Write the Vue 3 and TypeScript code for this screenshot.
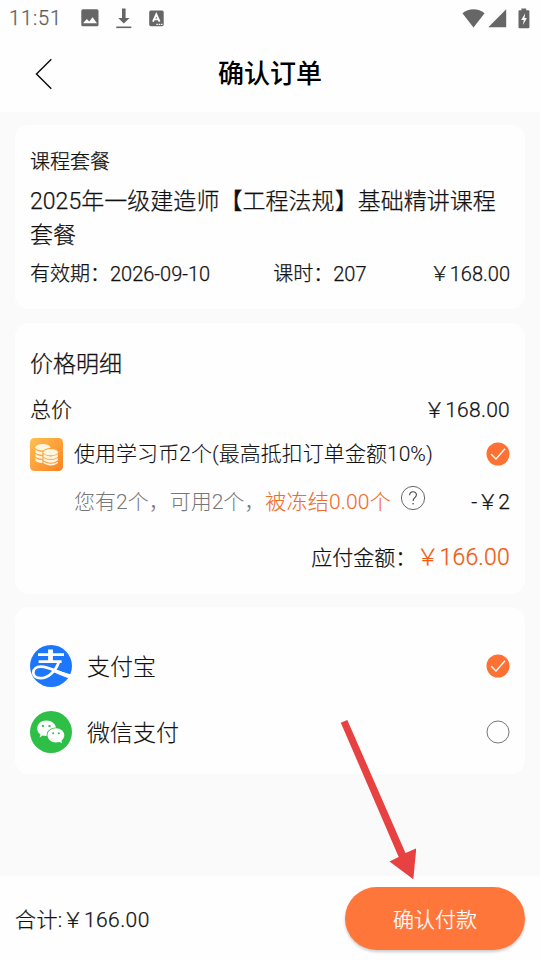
<script setup lang="ts">
import { ref } from 'vue'

type PayMethod = 'alipay' | 'wechat'

const useCoins = ref(true)
const pay = ref<PayMethod>('alipay')
const methods: { id: PayMethod; label: string }[] = [
  { id: 'alipay', label: '支付宝' },
  { id: 'wechat', label: '微信支付' },
]
</script>

<template>
  <div class="page">
    <div class="status">
      <span class="clock">11:51</span>
      <svg class="s-image" width="18" height="18" viewBox="0 0 18 18">
        <rect x="0.3" y="0.3" width="17.2" height="17" rx="1.6" fill="#666" />
        <path d="M2 14.2 5.8 10l2.4 2.6 3.4-4.4 4.4 6z" fill="#fff" />
      </svg>
      <svg class="s-down" width="16" height="21" viewBox="0 0 16 21">
        <path d="M6 0.5h3.6V10h4L7.8 15.6 2.2 10H6z" fill="#666" />
        <rect x="0.3" y="18.5" width="15" height="1.6" fill="#666" />
      </svg>
      <svg class="s-a" width="15" height="17" viewBox="0 0 15 17">
        <rect x="0.2" y="0.4" width="14.5" height="15.8" rx="1.6" fill="#666" />
        <path d="M4 11.6 7.3 4.4 10.6 11.6M5 9.4h4.6" fill="none" stroke="#fff" stroke-width="1.9" />
        <path d="M7.4 14.3h6.4" stroke="#fff" stroke-width="1.2" stroke-dasharray="1.5 .8" />
      </svg>
      <svg class="s-wifi" width="23" height="19" viewBox="0 0 23 19">
        <path d="M0.4 4.3C7-1 16-1 22.6 4.3L11.5 18.4z" fill="#666" />
      </svg>
      <svg class="s-signal" width="19" height="19" viewBox="0 0 19 19">
        <path d="M18.2 0.3v18H0.3z" fill="#666" />
      </svg>
      <svg class="s-battery" width="12" height="21" viewBox="0 0 12 21">
        <path d="M3.4 0.4h4.8v1.8h2.2q1 0 1 1v16q0 1-1 1H1.5q-1 0-1-1v-16q0-1 1-1h1.9z" fill="#666" />
        <path d="M7.2 5.2 3.2 12h2.6l-.9 5 4-7H6.5z" fill="#fff" />
      </svg>
    </div>

    <header class="header">
      <svg class="back" width="18" height="32" viewBox="0 0 18 32">
        <path d="M16.3 1.3 1.5 16l14.8 14.7" fill="none" stroke="#111" stroke-width="1.5" />
      </svg>
      <h1>确认订单</h1>
    </header>

    <main class="content">
      <section class="card course">
        <div class="kind">课程套餐</div>
        <div class="name">2025年一级建造师【工程法规】基础精讲课程套餐</div>
        <div class="meta">
          <span>有效期：2026-09-10</span>
          <span class="hours">课时：207</span>
          <span class="end">￥168.00</span>
        </div>
      </section>

      <section class="card price">
        <div class="heading">价格明细</div>
        <div class="row total"><span>总价</span><span class="end wide">￥168.00</span></div>
        <div class="row coins" @click="useCoins = !useCoins">
          <svg class="coin" width="33" height="33" viewBox="0 0 33 33">
            <defs>
              <linearGradient id="coinBg" x1="0" y1="0" x2="1" y2="1">
                <stop offset="0" stop-color="#ffc051" />
                <stop offset="1" stop-color="#fb8222" />
              </linearGradient>
            </defs>
            <rect width="33" height="33" rx="4.5" fill="url(#coinBg)" />
            <g fill="#fff6e2">
              <ellipse cx="12.8" cy="9.3" rx="7.4" ry="3.2" />
              <path d="M5.4 11.6q2 2.3 7 2.5v2.7q-5.4-.2-7-2.6zM5.4 15.7q2 2.3 7 2.5v2.7q-5.4-.2-7-2.6zM5.4 19.8q2 2.3 7 2.5v2.7q-5.4-.2-7-2.6z" />
            </g>
            <ellipse cx="20.7" cy="14.1" rx="8" ry="4" fill="#fea33a" />
            <g fill="#fff6e2">
              <ellipse cx="20.7" cy="14.2" rx="7.2" ry="3.1" />
              <path d="M13.5 16.3q7.2 4.2 14.4 0v2.6q-7.2 4.5-14.4 0zM13.5 20q7.2 4.2 14.4 0v2.6q-7.2 4.5-14.4 0zM13.5 23.7q7.2 4.2 14.4 0v1.6q-7.2 4.5-14.4 0z" />
            </g>
          </svg>
          <span class="coin-label">使用学习币2个(最高抵扣订单金额10%)</span>
          <svg v-if="useCoins" class="end tick" width="24" height="24" viewBox="0 0 24 24">
            <circle cx="12" cy="12" r="11.5" fill="#ff7033" />
            <path d="M5.2 12.2 10 17l9-10.2" fill="none" stroke="#fff" stroke-width="1.4" />
          </svg>
          <svg v-else class="end tick" width="24" height="24" viewBox="0 0 24 24">
            <circle cx="12" cy="12" r="11" fill="none" stroke="#666" />
          </svg>
        </div>
        <div class="row detail">
          <span class="own">您有2个，可用2个，</span><span class="frozen">被冻结0.00个</span>
          <svg class="help" width="26" height="26" viewBox="0 0 26 26">
            <circle cx="13" cy="13" r="11.6" fill="none" stroke="#555" stroke-width="0.9" />
            <path d="M9.6 10.2q.2-3.4 3.4-3.4t3.4 3q0 1.6-1.7 3-1.6 1.3-1.6 3.1" fill="none" stroke="#444" stroke-width="1.1" />
            <circle cx="13.1" cy="18.7" r="0.8" fill="#444" />
          </svg>
          <span class="end">-￥2</span>
        </div>
        <div class="row due"><span>应付金额：</span><span class="amount">￥166.00</span></div>
      </section>

      <section class="card methods">
        <div v-for="m in methods" :key="m.id" class="method" @click="pay = m.id">
          <svg v-if="m.id === 'alipay'" width="42" height="42" viewBox="0 0 42 42">
            <circle cx="21" cy="21" r="21" fill="#1c77fd" />
            <g fill="none" stroke="#fff">
              <path d="M8 9.6h26M8.6 16.6h23" stroke-width="2.8" />
              <path d="M20.5 4.5V17" stroke-width="4.8" />
              <path d="M29 16.5C26 26 18 33.2 10.6 33.2 5.6 33.2 3.3 30.6 3.3 27.7c0-3.6 3-6 7.6-6 7 0 15 4.5 29.5 9.7" stroke-width="2.7" />
            </g>
            <path d="M24.5 24.2q8 3 16.8 5.3l-1.6 4.2Q30 30.2 22.5 26.7z" fill="#fff" />
          </svg>
          <svg v-else width="42" height="42" viewBox="0 0 42 42">
            <circle cx="21" cy="21" r="21" fill="#2dbf46" />
            <path d="M16.3 9.5c5.3 0 9.3 3.4 9.7 7.1-5.2-.2-9.6 3.4-9.4 8.4-1.3.1-2.7-.1-4-.4l-3 1.8.8-3c-2-1.5-3.2-3.5-3.2-6 0-4.4 4-7.9 9.1-7.9z" fill="#fff" />
            <path d="M25.9 17.3c4.8 0 8.4 3.2 8.4 7 0 2.2-1.2 4.1-2.8 5.4l.6 2.5-2.6-1.3c-1.1.3-2.3.5-3.6.5-4.7 0-8.4-3.2-8.4-7.1s3.7-7 8.4-7z" fill="#fff" />
            <g fill="#2dbf46">
              <ellipse cx="12.9" cy="15" rx="1.3" ry="1.1" /><ellipse cx="19.5" cy="15" rx="1.3" ry="1.1" />
              <circle cx="23.2" cy="22.2" r="1" /><circle cx="28.8" cy="22.2" r="1" />
            </g>
          </svg>
          <span class="method-name">{{ m.label }}</span>
          <svg v-if="pay === m.id" class="end" width="24" height="24" viewBox="0 0 24 24">
            <circle cx="12" cy="12" r="11.5" fill="#ff7033" />
            <path d="M5.2 12.2 10 17l9-10.2" fill="none" stroke="#fff" stroke-width="1.4" />
          </svg>
          <svg v-else class="end" width="24" height="24" viewBox="0 0 24 24">
            <circle cx="12" cy="12" r="11" fill="none" stroke="#666" stroke-width="0.9" />
          </svg>
        </div>
      </section>
    </main>

    <footer class="footer">
      <span class="sum">合计:￥166.00</span>
      <button type="button">确认付款</button>
    </footer>

    <svg class="pointer" width="80" height="164" viewBox="0 0 80 164">
      <path d="M4.8 4.7 11.3 1.9 69.5 134.9l10.8-4.6L77.3 161.2 53.5 143.5l9.2-4.6z" fill="#e84142" />
    </svg>
  </div>
</template>

<style>
body {
  background: #fafafa;
}
</style>

<style scoped>
.page {
  position: relative;
  width: 540px;
  height: 960px;
  overflow: hidden;
  display: flex;
  flex-direction: column;
  background: #fafafa;
  color: #111;
  font-family: Roboto, 'Noto Sans CJK SC', sans-serif;
  font-weight: 300;
  -webkit-text-stroke-width: 0.25px;
  font-size: 21px;
  line-height: 30px;
  white-space: nowrap;
}
svg {
  display: block;
  flex: none;
}
.end {
  margin-left: auto;
}
.status {
  box-sizing: border-box;
  height: 36px;
  padding: 0 10px 0 9px;
  display: flex;
  align-items: center;
  background: #fefefe;
  color: #5c5c5c;
}
.clock {
  width: 72px;
  font-size: 20px;
  letter-spacing: 0.9px;
}
.s-down {
  margin-left: 17px;
}
.s-a {
  margin-left: 17px;
}
.s-wifi {
  margin-left: auto;
}
.s-signal {
  margin-left: 3px;
}
.s-battery {
  margin-left: 11px;
}
.header {
  box-sizing: border-box;
  height: 76px;
  padding-bottom: 1px;
  display: grid;
  grid-template-columns: 1fr auto 1fr;
  align-items: center;
  background: #fefefe;
}
.back {
  margin-left: 35px;
}
h1 {
  margin: 0;
  font-size: 26px;
  font-weight: 500;
  line-height: 40px;
  color: #000;
  -webkit-text-stroke-width: 0;
}
.content {
  flex: 1;
  display: flex;
  flex-direction: column;
  gap: 14px;
  padding: 13px 15px 0;
}
.card {
  box-sizing: border-box;
  padding: 0 15px;
  border-radius: 14px;
  background: #fefefe;
}
.course {
  height: 184px;
  padding-top: 22px;
  font-size: 20px;
}
.name {
  margin-top: 8px;
  font-size: 23px;
  line-height: 34px;
  letter-spacing: 0.04px;
  white-space: normal;
}
.meta {
  display: flex;
  margin-top: 6px;
}
.hours {
  margin-left: 63px;
}
.price {
  height: 271px;
  padding-top: 27px;
}
.heading {
  font-size: 23px;
}
.row {
  display: flex;
  align-items: center;
}
.total {
  margin-top: 15px;
}
.wide {
  letter-spacing: 0.25px;
}
.coins {
  margin-top: 13px;
  -webkit-text-stroke-width: 0.1px;
}
.coin-label {
  margin: -2px 0 0 11px;
  letter-spacing: 0.04px;
}
.tick {
  margin-top: -1px;
}
.detail {
  margin-top: 16px;
  padding-left: 44px;
}
.own {
  color: #777;
  -webkit-text-stroke-width: 0;
}
.frozen {
  color: #f06c2c;
  letter-spacing: 0.2px;
  -webkit-text-stroke-width: 0.1px;
}
.help {
  margin: -8px 0 0 9px;
}
.due {
  margin-top: 25px;
  justify-content: flex-end;
}
.amount {
  padding-top: 1px;
  font-size: 23px;
  letter-spacing: 0.2px;
  color: #f25a12;
}
.methods {
  height: 167px;
  padding-top: 38px;
  margin-top: -1px;
  display: flex;
  flex-direction: column;
  gap: 24px;
}
.method {
  display: flex;
  align-items: center;
  font-size: 23px;
  -webkit-text-stroke-width: 0.15px;
}
.method-name {
  margin-left: 15px;
  padding-top: 4px;
}
.footer {
  box-sizing: border-box;
  height: 84px;
  padding: 0 15px;
  display: flex;
  align-items: center;
  justify-content: space-between;
  background: #fefefe;
}
.sum {
  padding-top: 3px;
  letter-spacing: 0.4px;
}
button {
  width: 180px;
  height: 63px;
  padding: 3px 0 0;
  border: 0;
  border-radius: 32px;
  background: #ff763b;
  box-shadow: 0 2px 3px rgba(0, 0, 0, 0.2);
  color: #fff;
  font: inherit;
}
.pointer {
  position: absolute;
  left: 336px;
  top: 718px;
}
</style>
